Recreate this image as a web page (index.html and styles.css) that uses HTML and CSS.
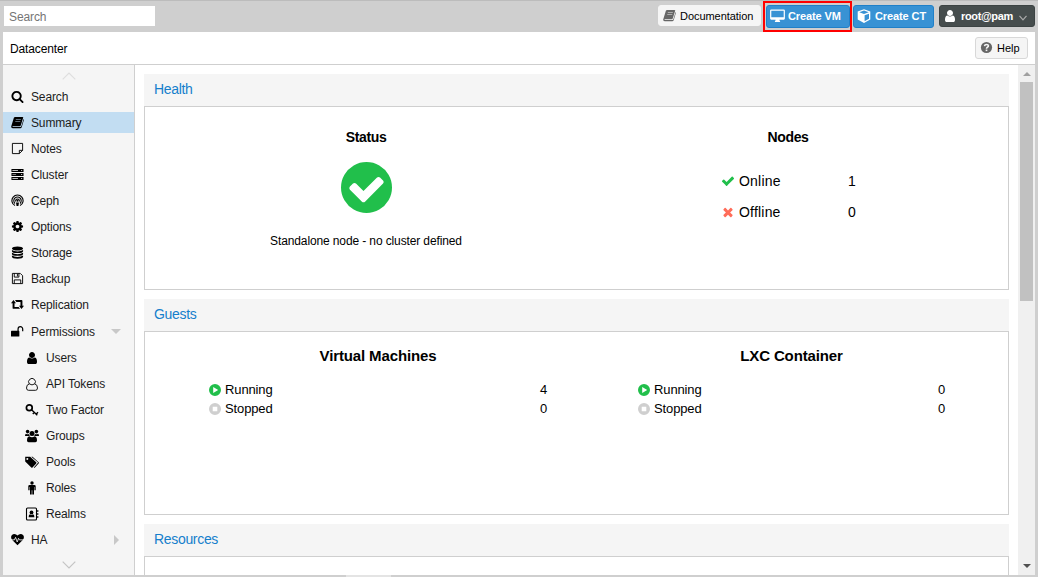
FILE: index.html
```html
<!DOCTYPE html>
<html lang="en">
<head>
<meta charset="utf-8">
<title>Datacenter</title>
<link rel="stylesheet" href="styles.css">
</head>
<body>
<svg class="defs" aria-hidden="true">
  <symbol id="search" viewBox="0 0 1792 1792"><path fill-rule="evenodd" d="M1216 832q0-185-131.500-316.500t-316.500-131.500-316.500 131.500-131.500 316.500 131.500 316.500 316.500 131.500 316.500-131.500 131.500-316.500zm512 832q0 52-38 90t-90 38q-54 0-90-38l-343-342q-179 124-399 124-143 0-273.500-55.500t-225-150-150-225-55.500-273.500 55.500-273.500 150-225 225-150 273.500-55.500 273.500 55.500 225 150 150 225 55.500 273.500q0 220-124 399l343 343q37 37 37 90z"/></symbol>
  <symbol id="book" viewBox="0 0 14 14"><path fill-rule="evenodd" d="M4.400 1h8q1 0 .7 1l-2.500 8q-.3 1-1.300 1H2.200q-.9 0-.8.6.1.3.9.300H10q.8 0 1.100-.8l2.500-8q.5.4.3 1.100l-2.400 7.900q-.4 1.200-1.500 1.200H2.200Q.2 13.300.2 11.300L3.100 2q.3-1 1.300-1zM5.300 3.300l-.2.600h5.400l.2-.6zM4.700 5.300l-.2.600h5.400l.2-.6z"/></symbol>
  <symbol id="note" viewBox="0 0 14 14"><path fill="none" stroke="currentColor" stroke-width="1" d="M1.500 1.500h11v7.500l-3.500 3.500h-7.500zM12.500 9H9v3.500"/></symbol>
  <symbol id="server" viewBox="0 0 14 14"><path fill-rule="evenodd" d="M.5 1h13v3.400H.5zM.5 5.300h13v3.400H.5zM.5 9.600h13V13H.5zM1.500 2.300v.8h6v-.8zM1.500 6.600v.8h4v-.8zM1.500 10.900v.8h6v-.8zM11 2.200v1h1v-1zM11 6.500v1h1v-1zM11 10.800v1h1v-1z"/></symbol>
  <symbol id="ceph" viewBox="0 0 14 14"><g fill="none" stroke="currentColor" stroke-width="1.200"><path d="M4.300 12.500A6 6 0 1 1 9.700 12.500M4.300 10.200A4 4 0 1 1 9.700 10.200"/><path d="M5.200 8.200A2 2 0 1 1 8.800 8.200"/></g><circle cx="7" cy="7.300" r="1.100"/><path d="M5.400 9.200h3.200L8 13H6z"/></symbol>
  <symbol id="cog" viewBox="0 0 1792 1792"><path fill-rule="evenodd" d="M1152 896q0-106-75-181t-181-75-181 75-75 181 75 181 181 75 181-75 75-181zm512-109v222q0 12-8 23t-20 13l-185 28q-19 54-39 91 35 50 107 138 10 12 10 25t-9 23q-27 37-99 108t-94 71q-12 0-26-9l-138-108q-44 23-91 38-16 136-29 186-7 28-36 28h-222q-14 0-24.500-8.500t-11.500-21.500l-28-184q-49-16-90-37l-141 107q-10 9-25 9-14 0-25-11-126-114-165-168-7-10-7-23 0-12 8-23 15-21 51-66.500t54-70.500q-27-50-41-99l-183-27q-13-2-21-12.500t-8-23.500v-222q0-12 8-23t19-13l186-28q14-46 39-92-40-57-107-138-10-12-10-24 0-10 9-23 26-36 98.500-107.500t94.500-71.500q13 0 26 10l138 107q44-23 91-38 16-136 29-186 7-28 36-28h222q14 0 24.500 8.500t11.500 21.500l28 184q49 16 90 37l142-107q9-9 24-9 13 0 25 10 129 119 165 170 7 8 7 22 0 12-8 23-15 21-51 66.500t-54 70.500q26 50 41 98l183 28q13 2 21 12.500t8 23.500z"/></symbol>
  <symbol id="database" viewBox="0 0 14 14"><ellipse cx="7" cy="2.700" rx="6" ry="2.200"/><path d="M1 4.300q2 1.500 6 1.500t6-1.500v1.300q0 2-6 2t-6-2zM1 7.300q2 1.500 6 1.500t6-1.500v1.300q0 2-6 2t-6-2zM1 10.300q2 1.500 6 1.500t6-1.500v1.300q0 2-6 2t-6-2z"/></symbol>
  <symbol id="floppy" viewBox="0 0 14 14"><path fill="none" stroke="currentColor" d="M1.500 1.500h8.500l2.500 2.500v8.500h-11zM3.500 12.500v-4h7v4M3.500 1.500v4h5v-4M6.900 2v2.700"/></symbol>
  <symbol id="retweet" viewBox="0 0 14 14"><path d="M2.700 2.200 5.400 5.700H3.800v3.900h4.400l1.500 2.100H2.600q-.9 0-.9-.9V5.700H0zM4.300 2.200h7.100q.9 0 .9.900v5.200H14l-2.700 3.500-2.700-3.500h1.600V4.400H5.800z"/></symbol>
  <symbol id="unlock" viewBox="0 0 14 14"><rect x="0" y="6.300" width="9" height="6.200" rx=".6"/><path fill="none" stroke="currentColor" stroke-width="1.300" d="M7.600 6.500V4.300a2.500 2.500 0 0 1 5 0v2.500"/></symbol>
  <symbol id="user" viewBox="0 0 1792 1792"><path d="M1536 1399q0 109-62.500 187t-150.500 78h-854q-88 0-150.500-78t-62.500-187q0-85 8.500-160.500t31.500-152 58.500-131 94-89 134.500-34.500q131 128 313 128t313-128q76 0 134.500 34.500t94 89 58.500 131 31.500 152 8.500 160.500zm-256-887q0 159-112.500 271.500t-271.500 112.500-271.500-112.500-112.500-271.500 112.500-271.500 271.500-112.500 271.500 112.500 112.500 271.500z"/></symbol>
  <symbol id="user-o" viewBox="0 0 14 14"><path fill="none" stroke="currentColor" stroke-width=".9" d="M4.300 6.900A3.400 3.400 0 1 1 9.700 6.900Q12.500 7.500 12.500 11q0 2.300-2 2.300h-7q-2 0-2-2.300Q1.500 7.500 4.300 6.900q2.700 2 5.400 0"/></symbol>
  <symbol id="key" viewBox="0 0 14 14"><circle cx="4.300" cy="4.700" r="2.900" fill="none" stroke="currentColor" stroke-width="1.700"/><path fill="none" stroke="currentColor" stroke-width="1.400" d="m6.300 6.600 6 5.700M9.300 9.300l-1.500 1.600M11.500 10.700l1.500-1.500"/></symbol>
  <symbol id="group" viewBox="0 0 14 14"><circle cx="2.600" cy="2.600" r="1.800"/><circle cx="11.400" cy="2.600" r="1.800"/><circle cx="7" cy="4.600" r="2.500"/><path d="M1 4.700q1.500 1 3 .2.200 1.500 1 2.200H0q0-2 1-2.400zM13 4.700q-1.500 1-3 .2-.2 1.500-1 2.200h5q0-2-1-2.400zM4.300 7.300q2.700 1.700 5.400 0Q12 7.900 12 11.500q0 1.700-1.600 1.700H3.600Q2 13.200 2 11.500 2 7.900 4.300 7.300z"/></symbol>
  <symbol id="tags" viewBox="0 0 14 14"><path fill-rule="evenodd" d="M.2 1.800h5l6 5.500q.5.600 0 1.200l-3.700 3.900q-.6.500-1.200 0L.2 6.500zM2.300 2.900a1 1 0 1 0 .1 2 1 1 0 0 0-.1-2z"/><path d="M6.300 1.800h1.300l6 5.500q.5.600 0 1.200l-3.700 3.900q-.5.500-1.100.1l4-4.400q.3-.4 0-.8z"/></symbol>
  <symbol id="male" viewBox="0 0 14 14"><circle cx="7" cy="2" r="1.700"/><path d="M4.600 4h4.800q1.300 0 1.300 1.300v3.900H9.400V6H9v7.600H7.300V9.300h-.6v4.300H5V6h-.4v3.200H3.300V5.300Q3.300 4 4.600 4z"/></symbol>
  <symbol id="address" viewBox="0 0 14 14"><rect x="1.500" y="1" width="10" height="12" rx="1" fill="none" stroke="currentColor" stroke-width="1.100"/><path d="M12.300 3h1v2h-1zM12.300 6h1v2h-1zM12.300 9h1v2h-1zM3.600 10.300q0-2.800 1.500-3 1.400 1 2.800 0 1.500.2 1.500 3z"/><circle cx="6.500" cy="5.400" r="1.900"/></symbol>
  <symbol id="heartbeat" viewBox="0 0 14 14"><path d="M7 13.200 1.300 7.500Q0 6 .1 4.400.4 1.200 3.600 1q2 0 3.400 1.800Q8.400 1 10.400 1q3.200.2 3.500 3.400.1 1.600-1.200 3.100z"/><path fill="none" stroke="#f5f5f5" stroke-width=".9" d="M0 7.400h3.700l1.200-2.700 1.800 5 1.400-4 1 1.700H14"/></symbol>
  <symbol id="desktop" viewBox="0 0 15 14"><path fill-rule="evenodd" d="M1.200.5h12.600q1.100 0 1.100 1.100v8q0 1.100-1.100 1.100H9.400q.1 1 .7 1.500v.8H4.900v-.8q.6-.5.700-1.500H1.200Q.1 10.700.1 9.600v-8Q.1.500 1.200.500zM1.300 1.700v6.600h12.400V1.700z"/></symbol>
  <symbol id="cube" viewBox="0 0 14 14"><path fill-rule="evenodd" d="M7 .2 13.300 2.600v7.900L7 13.900.7 10.500V2.600zM7 1.500 2.300 3.300 7 5l4.700-1.700zM7.600 6.300v5.900l4.400-2.400V4.700z"/></symbol>
  <symbol id="question" viewBox="0 0 14 14"><circle cx="7" cy="7" r="6"/><path fill="none" stroke="#f5f5f5" stroke-width="1.700" d="M4.800 5.500q.3-1.800 2.200-1.800 2 0 2.100 1.500 0 .9-1.100 1.500-1 .6-1 1.600"/><path fill="#f5f5f5" d="M6.100 9.200h1.800v1.700H6.100z"/></symbol>
  <symbol id="check-circle" viewBox="128 128 1536 1536"><path fill-rule="evenodd" d="M1412 734q0-28-18-46l-91-90q-19-19-45-19t-45 19l-408 407-226-226q-19-19-45-19t-45 19l-91 90q-18 18-18 46 0 27 18 45l362 362q19 19 45 19 27 0 46-19l543-543q18-18 18-45zm252 162q0 209-103 385.500t-279.500 279.500-385.500 103-385.500-103-279.500-279.500-103-385.500 103-385.500 279.500-279.500 385.500-103 385.500 103 279.500 279.500 103 385.500z"/></symbol>
  <symbol id="check" viewBox="0 0 1792 1792"><path d="M1671 566q0 40-28 68l-724 724-136 136q-28 28-68 28t-68-28l-136-136-362-362q-28-28-28-68t28-68l136-136q28-28 68-28t68 28l294 295 656-657q28-28 68-28t68 28l136 136q28 28 28 68z"/></symbol>
  <symbol id="times" viewBox="0 0 1792 1792"><path d="M1490 1322q0 40-28 68l-136 136q-28 28-68 28t-68-28l-294-294-294 294q-28 28-68 28t-68-28l-136-136q-28-28-28-68t28-68l294-294-294-294q-28-28-28-68t28-68l136-136q28-28 68-28t68 28l294 294 294-294q28-28 68-28t68 28l136 136q28 28 28 68t-28 68l-294 294 294 294q28 28 28 68z"/></symbol>
  <symbol id="play" viewBox="0 0 12 12"><path fill-rule="evenodd" d="M6 0a6 6 0 1 0 0 12A6 6 0 0 0 6 0zM4.200 3v6l5-3z"/></symbol>
  <symbol id="stop" viewBox="0 0 12 12"><path fill-rule="evenodd" d="M6 0a6 6 0 1 0 0 12A6 6 0 0 0 6 0zM3.700 3.700v4.600h4.600V3.700z"/></symbol>
  <symbol id="chev-up" viewBox="0 0 14 8"><path fill="none" stroke="currentColor" stroke-width="1.200" d="m.7 7.300 6.300-6.300 6.300 6.300"/></symbol>
  <symbol id="chev-down" viewBox="0 0 14 8"><path fill="none" stroke="currentColor" stroke-width="1.200" d="m.7.7 6.300 6.300 6.300-6.300"/></symbol>
  <symbol id="caret" viewBox="0 0 8 6"><path fill="none" stroke="currentColor" stroke-width="1.200" d="m.5.800 3.500 4 3.500-4"/></symbol>
</svg>
<div class="app">
  <header class="toolbar">
    <div class="searchbox">Search</div>
    <div class="actions">
      <div class="btn doc"><svg><use href="#book"/></svg><span>Documentation</span></div>
      <div class="highlight"><div class="btn blue"><svg class="wide"><use href="#desktop"/></svg><span>Create VM</span></div></div>
      <div class="btn blue ct"><svg><use href="#cube"/></svg><span>Create CT</span></div>
      <div class="btn account"><svg><use href="#user"/></svg><span>root@pam</span><svg class="caret"><use href="#caret"/></svg></div>
    </div>
  </header>
  <main class="panel">
    <div class="titlebar"><span>Datacenter</span><div class="btn help"><svg><use href="#question"/></svg><span>Help</span></div></div>
    <div class="body">
      <nav class="sidebar">
        <svg class="scroll faint"><use href="#chev-up"/></svg>
        <div class="menu">
          <div class="item"><svg><use href="#search"/></svg><span>Search</span></div>
          <div class="item selected"><svg><use href="#book"/></svg><span>Summary</span></div>
          <div class="item"><svg><use href="#note"/></svg><span>Notes</span></div>
          <div class="item"><svg><use href="#server"/></svg><span>Cluster</span></div>
          <div class="item"><svg><use href="#ceph"/></svg><span>Ceph</span></div>
          <div class="item"><svg><use href="#cog"/></svg><span>Options</span></div>
          <div class="item"><svg><use href="#database"/></svg><span>Storage</span></div>
          <div class="item"><svg><use href="#floppy"/></svg><span>Backup</span></div>
          <div class="item"><svg><use href="#retweet"/></svg><span>Replication</span></div>
          <div class="item group"><svg><use href="#unlock"/></svg><span>Permissions</span><i class="open"></i></div>
          <div class="item child"><svg><use href="#user"/></svg><span>Users</span></div>
          <div class="item child"><svg><use href="#user-o"/></svg><span>API Tokens</span></div>
          <div class="item child"><svg><use href="#key"/></svg><span>Two Factor</span></div>
          <div class="item child"><svg><use href="#group"/></svg><span>Groups</span></div>
          <div class="item child"><svg><use href="#tags"/></svg><span>Pools</span></div>
          <div class="item child"><svg><use href="#male"/></svg><span>Roles</span></div>
          <div class="item child"><svg><use href="#address"/></svg><span>Realms</span></div>
          <div class="item"><svg><use href="#heartbeat"/></svg><span>HA</span><i class="closed"></i></div>
        </div>
        <svg class="scroll"><use href="#chev-down"/></svg>
      </nav>
      <section class="content">
        <article class="card">
          <h2>Health</h2>
          <div class="card-body health">
            <div class="status"><h3>Status</h3><svg class="ok"><use href="#check-circle"/></svg><p>Standalone node - no cluster defined</p></div>
            <div class="nodes"><h3>Nodes</h3>
              <div class="node"><svg class="green"><use href="#check"/></svg><span>Online</span><b>1</b></div>
              <div class="node"><svg class="red"><use href="#times"/></svg><span>Offline</span><b>0</b></div>
            </div>
          </div>
        </article>
        <article class="card">
          <h2>Guests</h2>
          <div class="card-body guests">
            <div class="guest"><h3>Virtual Machines</h3>
              <div class="count"><svg class="green"><use href="#play"/></svg><span>Running</span><b>4</b></div>
              <div class="count"><svg class="grey"><use href="#stop"/></svg><span>Stopped</span><b>0</b></div>
            </div>
            <div class="guest lxc"><h3>LXC Container</h3>
              <div class="count"><svg class="green"><use href="#play"/></svg><span>Running</span><b>0</b></div>
              <div class="count"><svg class="grey"><use href="#stop"/></svg><span>Stopped</span><b>0</b></div>
            </div>
          </div>
        </article>
        <article class="card">
          <h2>Resources</h2>
          <div class="card-body"></div>
        </article>
      </section>
      <div class="scrollbar"><i class="arrow-up"></i><div class="thumb"></div><i class="arrow-down"></i></div>
    </div>
  </main>
  <div class="splitter"><div class="grip"></div></div>
</div>
</body>
</html>
```

FILE: styles.css
```css
* { box-sizing: border-box; }
body { margin: 0; font: 12px/16px "Liberation Sans", Arial, sans-serif; color: #000; }
h2, h3, p { margin: 0; }
b { font-weight: 400; }
svg { width: 14px; height: 14px; flex: none; fill: currentColor; display: block; }
.defs { position: absolute; width: 0; height: 0; }
.app { width: 1038px; height: 577px; background: #cfcfcf; overflow: hidden; display: flex; flex-direction: column; }

.toolbar { height: 32px; border-top: 1px solid #bcbcbc; display: flex; justify-content: space-between; padding: 0 3px 0 4px; flex: none; }
.searchbox { width: 151px; height: 20px; margin-top: 5px; background: #fff; color: #757575; padding: 4px 5px; line-height: 15px; letter-spacing: -.1px; }
.actions { display: flex; }
.btn { display: flex; align-items: center; height: 22px; border: 1px solid #d8d8d8; border-radius: 3px; background: #f5f5f5; font-size: 11px; white-space: nowrap; }
.btn svg { width: 13px; height: 13px; }
.doc { width: 103px; height: 21px; margin-top: 4px; border-color: #f5f5f5; padding-left: 4px; margin-right: 2px; }
.doc svg, .help svg { color: #666; }
.doc span { margin-left: 4px; letter-spacing: -.05px; }
.highlight { width: 89px; height: 31px; border: 2px solid #f00; padding: 2px 1px; }
.blue { background: #3892d4; border-color: #2080c8; color: #fff; font-weight: 700; }
.highlight .blue { width: 84px; height: 23px; padding: 0 0 2px 3px; }
.btn svg.wide { width: 15px; height: 14px; }
.highlight span { margin-left: 3px; letter-spacing: -.1px; }
.ct { width: 81px; height: 23px; margin: 4px 0 0 1px; padding: 0 0 2px 3px; }
.ct svg { width: 14px; height: 14px; }
.ct span { margin-left: 4px; letter-spacing: -.1px; }
.account { width: 96px; height: 22px; margin: 4px 0 0 5px; padding-left: 3px; background: #464d4d; border-color: #3c4343; color: #fff; font-weight: 700; }
.account svg { width: 14px; height: 14px; }
.account span { margin-left: 4px; letter-spacing: -.35px; }
.account .caret { width: 8px; height: 6px; margin: 3px 0 0 6px; color: #aaa; }

.panel { margin: 0 3px; height: 543px; background: #fff; display: flex; flex-direction: column; flex: none; }
.titlebar { height: 33px; border-bottom: 1px solid #cfcfcf; display: flex; justify-content: space-between; align-items: center; padding: 0 7px; flex: none; letter-spacing: -.13px; }
.titlebar > span { padding-top: 1px; }
.help { width: 53px; padding-left: 4px; border-color: #d8d8d8; margin-top: -1px; letter-spacing: 0; }
.help span { margin-left: 4px; }
.body { display: flex; flex: 1; min-height: 0; }

.sidebar { width: 132px; border-right: 1px solid #cfcfcf; background: #f5f5f5; flex: none; display: flex; flex-direction: column; }
.scroll { width: 14px; height: 8px; margin: 4px 0 0 59px; color: #c4c4c4; }
.scroll.faint { margin: 7px 0 6px 59px; color: #dedede; }
.menu { display: flex; flex-direction: column; gap: 5px; margin-bottom: 7px; }
.item { height: 21px; display: flex; align-items: center; padding-left: 8px; color: #1c1c1c; letter-spacing: -.14px; }
.item svg { color: #000; width: 13px; height: 13px; }
.item span { margin-left: 7px; }
.item i { margin-left: auto; margin-right: 13px; }
.selected { background: #c2ddf2; }
.group { margin-top: 1px; }
.child { padding-left: 22px; }
.child svg { width: 14px; height: 14px; }
.open { border: 5px solid transparent; border-top-color: #c8c8c8; border-bottom: 0; }
.item .closed { border: 5px solid transparent; border-left-color: #c8c8c8; border-right: 0; margin-right: 15px; }

.content { flex: 1; padding: 9px 9px 0; overflow: hidden; display: flex; flex-direction: column; gap: 9px; }
.card { width: 865px; flex: none; }
.card h2 { height: 32px; background: #f5f5f5; color: #157fcc; font-size: 14px; font-weight: 400; line-height: 31px; padding-left: 10px; letter-spacing: -.32px; }
.card-body { height: 184px; border: 1px solid #cfcfcf; display: flex; }
.status { width: 422px; margin-left: 10px; display: flex; flex-direction: column; align-items: center; padding-top: 22px; }
.status p { letter-spacing: -.12px; }
h3 { font-size: 14px; line-height: 16px; text-align: center; letter-spacing: -.35px; }
.ok { width: 51px; height: 51px; margin: 17px 0 20px; color: #21bf4b; }
.nodes { width: 422px; padding-top: 22px; display: flex; flex-direction: column; }
.nodes h3 { margin-bottom: 20px; }
.node { font-size: 14px; display: flex; align-items: center; height: 31px; padding-left: 144px; }
.node span { width: 109px; margin-left: 4px; letter-spacing: .2px; }
.node svg { width: 14px; height: 14px; }
.green { color: #21bf4b; }
.red { color: #ff6c59; }
.grey { color: #cfcfcf; }
.guest { width: 338px; margin-left: 64px; padding-top: 16px; }
.guest h3 { font-size: 15px; margin-bottom: 16px; letter-spacing: -.13px; }
.lxc { width: 307px; margin-left: 91px; }
.count { display: flex; align-items: center; font-size: 13px; height: 19px; letter-spacing: -.12px; }
.count svg { width: 12px; height: 12px; }
.count span { margin-left: 4px; }
.count b { margin-left: auto; }

.scrollbar { width: 17px; background: #f0f0f0; display: flex; flex-direction: column; align-items: center; flex: none; padding: 7px 0; }
.arrow-up { border: 4px solid transparent; border-top: 0; border-bottom-color: #a0a0a0; margin-bottom: 6px; }
.thumb { width: 13px; height: 219px; background: #c1c1c1; }
.arrow-down { border: 4px solid transparent; border-bottom: 0; border-top-color: #505050; margin-top: auto; }
.splitter { height: 2px; padding-left: 346px; }
.grip { width: 45px; height: 2px; background: #e4e4e4; }
```
